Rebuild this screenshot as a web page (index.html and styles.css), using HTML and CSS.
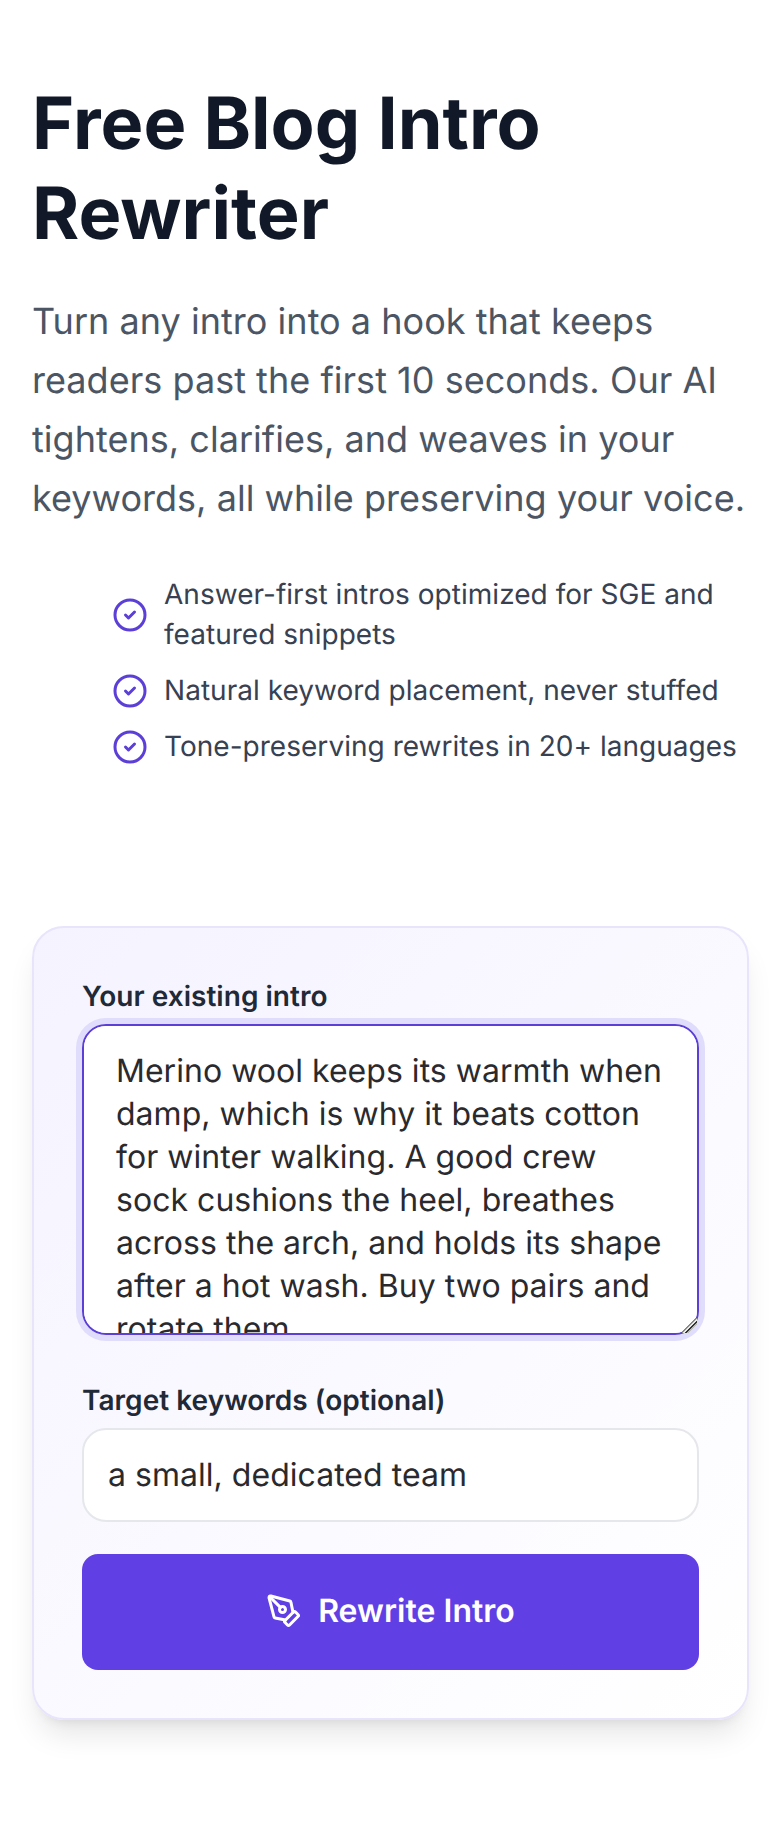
FILE: index.html
```html
<!DOCTYPE html>
<html lang="en">
<head>
<meta charset="utf-8">
<title>Free Blog Intro Rewriter</title>
<link rel="stylesheet" href="styles.css">
</head>
<body>
<main class="page">
  <section class="hero">
    <h1 class="title">Free Blog Intro Rewriter</h1>
    <p class="lead">Turn any intro into a hook that keeps readers past the first 10 seconds. Our AI tightens, clarifies, and weaves in your keywords, all while preserving your voice.</p>
    <ul class="features">
      <li class="feature">
        <svg class="check" viewBox="0 0 24 24" fill="none" stroke="currentColor" stroke-width="2" stroke-linecap="round" stroke-linejoin="round"><circle cx="12" cy="12" r="10"/><path d="m9 12 2 2 4-4"/></svg>
        <span>Answer-first intros optimized for SGE and featured snippets</span>
      </li>
      <li class="feature">
        <svg class="check" viewBox="0 0 24 24" fill="none" stroke="currentColor" stroke-width="2" stroke-linecap="round" stroke-linejoin="round"><circle cx="12" cy="12" r="10"/><path d="m9 12 2 2 4-4"/></svg>
        <span>Natural keyword placement, never stuffed</span>
      </li>
      <li class="feature">
        <svg class="check" viewBox="0 0 24 24" fill="none" stroke="currentColor" stroke-width="2" stroke-linecap="round" stroke-linejoin="round"><circle cx="12" cy="12" r="10"/><path d="m9 12 2 2 4-4"/></svg>
        <span>Tone-preserving rewrites in 20+ languages</span>
      </li>
    </ul>
  </section>
  <form class="card">
    <label class="label" for="intro">Your existing intro</label>
    <textarea class="intro" id="intro">Merino wool keeps its warmth when damp, which is why it beats cotton for winter walking. A good crew sock cushions the heel, breathes across the arch, and holds its shape after a hot wash. Buy two pairs and rotate them.</textarea>
    <label class="label label-second" for="keywords">Target keywords (optional)</label>
    <input class="keywords" id="keywords" type="text" value="a small, dedicated team">
    <button class="submit" type="button">
      <svg class="pen" viewBox="0 0 24 24" fill="none" stroke="currentColor" stroke-width="2" stroke-linecap="round" stroke-linejoin="round"><path d="M15.707 21.293a1 1 0 0 1-1.414 0l-1.586-1.586a1 1 0 0 1 0-1.414l5.586-5.586a1 1 0 0 1 1.414 0l1.586 1.586a1 1 0 0 1 0 1.414z"/><path d="m18 13-1.375-6.874a1 1 0 0 0-.746-.776L3.235 2.028a1 1 0 0 0-1.207 1.207L5.35 15.879a1 1 0 0 0 .776.746L13 18"/><path d="m2.3 2.3 7.286 7.286"/><circle cx="11" cy="11" r="2"/></svg>
      <span>Rewrite Intro</span>
    </button>
  </form>
</main>
</body>
</html>
```
FILE: styles.css
```css
* { box-sizing: border-box; }
html, body { margin: 0; padding: 0; background: #fff; }
body { font-family: Inter, "Noto Sans", sans-serif; color: #111827; text-rendering: geometricPrecision; letter-spacing: .03px; }
.page { padding: 79px 31px 120px 32px; }
.title { margin: 0 0 33px; font-size: 72px; line-height: 90px; font-weight: 700; color: #111827; }
.lead { margin: 0; font-size: 36px; line-height: 59px; color: #4b5563; }
.features { list-style: none; margin: 46px 0 0; padding: 0 0 0 80px; display: flex; flex-direction: column; gap: 16px; }
.feature { display: flex; align-items: center; gap: 16px; font-size: 28px; line-height: 40px; color: #374151; }
.check { flex: none; width: 36px; height: 36px; margin-top: 2px; color: #5b3fd6; }
.card { margin-top: 160px; padding: 48px; border: 2px solid #e8e4fb; border-radius: 32px; background: linear-gradient(135deg, #f5f3ff, #ffffff); box-shadow: 0 20px 30px -6px rgba(0,0,0,.1), 0 8px 12px -8px rgba(0,0,0,.1); display: flex; flex-direction: column; }
.label { font-size: 28px; line-height: 40px; font-weight: 600; color: #1f2937; margin-bottom: 8px; }
.label-second { margin-top: 45px; }
.intro { display: block; width: 100%; height: 311px; padding: 23px 32px 24px; border: 2px solid #5b3fd6; border-radius: 24px; background: #fff; box-shadow: 0 0 0 6px #e0dcfc; outline: none; font-family: Inter, sans-serif; font-size: 32px; line-height: 43px; letter-spacing: .03px; color: #2a2a2e; resize: vertical; scrollbar-width: none; text-rendering: geometricPrecision; }
.intro::-webkit-resizer { background: linear-gradient(135deg, transparent 0 44%, #8a8a8a 44% 52%, #e8e8e8 52% 58%, #333 58% 66%, #bbb 66% 72%, transparent 72%); }
.keywords { display: block; width: 100%; height: 94px; padding: 0 24px 2px; border: 2px solid #e5e7eb; border-radius: 24px; background: #fff; outline: none; font-family: Inter, sans-serif; font-size: 32px; letter-spacing: .03px; color: #2a2a2e; text-rendering: geometricPrecision; }
.submit { margin-top: 32px; height: 116px; width: 100%; padding: 0 0 3px; border: 0; border-radius: 16px; background: #603fe5; color: #fff; display: flex; align-items: center; justify-content: center; gap: 16px; font-family: Inter, sans-serif; font-size: 32px; font-weight: 600; letter-spacing: .03px; text-rendering: geometricPrecision; }
.pen { width: 36px; height: 36px; }
```
